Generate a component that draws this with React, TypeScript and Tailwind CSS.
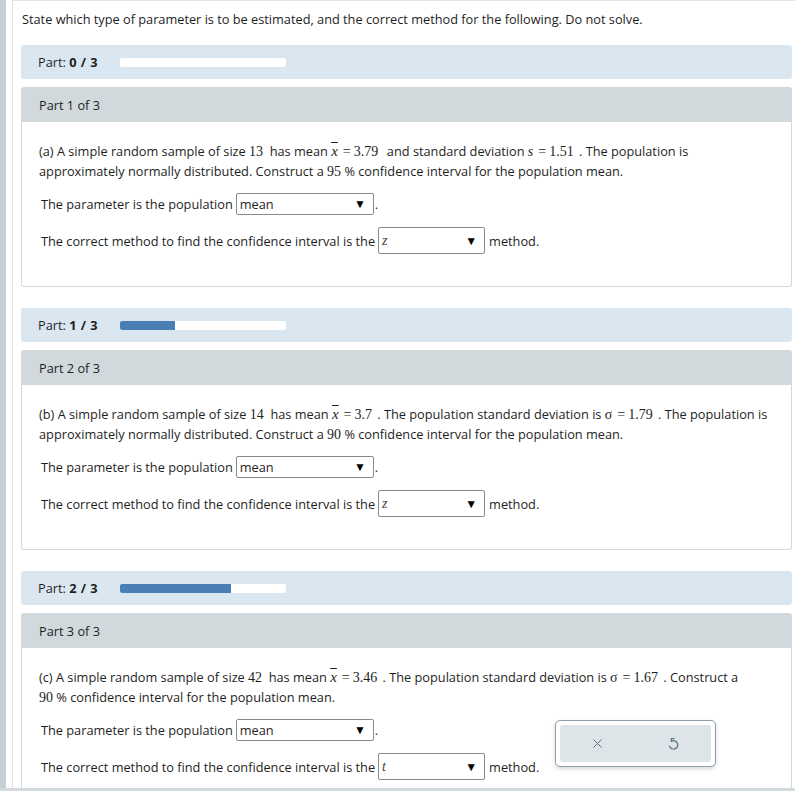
import { X } from "lucide-react";

const BODY = "font-['Open_Sans',Arial,sans-serif] text-[12.75px] leading-[20px] text-[#1e1e1e]";

function M({ children, italic }: { children: React.ReactNode; italic?: boolean }) {
  return (
    <span className={`font-['Liberation_Serif','Times_New_Roman',serif] text-[14px] leading-none ${italic ? "italic" : ""}`}>
      {children}
    </span>
  );
}

function XBar() {
  return <span className="font-['Liberation_Serif',serif] text-[15px] leading-none italic overline">x</span>;
}

function Eq({ children }: { children: React.ReactNode }) {
  return (
    <span className="font-['Liberation_Serif',serif] text-[14px] leading-none mx-[2px]">
      <span className="mx-[3px]">=</span>
      {children}
    </span>
  );
}

function Progress({ done }: { done: number }) {
  return (
    <div className="flex h-[34px] items-center rounded-[3px] bg-[#dae6f0] pl-[17px]">
      <span className="w-[82px]">
        Part: <b className="font-bold tracking-[0.5px]">{done} / 3</b>
      </span>
      <div className="h-[9px] w-[166px] overflow-hidden rounded-[2px] bg-white">
        <div className="h-full bg-[#4a7eb5]" style={{ width: `${(done / 3) * 100}%` }} />
      </div>
    </div>
  );
}

function Select({ value, italic, wide }: { value: string; italic?: boolean; wide?: boolean }) {
  return (
    <span
      className={`mx-[3px] inline-flex items-center justify-between rounded-[2px] border border-[#8a8a8a] bg-white pl-[3px] pr-[7px] align-middle ${
        wide ? "h-[27px] w-[107px]" : "h-[22px] w-[138px]"
      }`}
    >
      <span className={italic ? "font-['Liberation_Serif',serif] text-[14px] italic text-[#444]" : ""}>{value}</span>
      <span className="text-[12px] leading-none text-black">▼</span>
    </span>
  );
}

function ResetIcon() {
  return (
    <svg width="15" height="15" viewBox="0 0 16 16" fill="none" stroke="currentColor" strokeWidth="1.4" strokeLinecap="round" strokeLinejoin="round">
      <path d="M8.6 2.8 H5.7 V5.6" />
      <path d="M5.7 5.6 A4.5 4.5 0 1 1 3.8 11" />
    </svg>
  );
}

function Question({
  n,
  children,
  method,
}: {
  n: number;
  children: React.ReactNode;
  method: string;
}) {
  return (
    <div>
      <div className="flex h-[35px] items-center rounded-t-[3px] bg-[#d1d9dc] pl-[18px]">Part {n} of 3</div>
      <div className="rounded-b-[3px] border border-t-0 border-[#d1d9dc] pl-[17px] pt-[19px] pb-[32px]">
        <p className="pr-[4px]">{children}</p>
        <div className="mt-[12px] flex items-center pl-[2px]">
          The parameter is the population
          <Select value="mean" />
          <span className="-ml-[2px]">.</span>
        </div>
        <div className="mt-[12px] flex items-center pl-[2px]">
          The correct method to find the confidence interval is the
          <Select value={method} italic wide />
          <span className="ml-[1px]">method.</span>
        </div>
      </div>
    </div>
  );
}

export default function App() {
  return (
    <div className={`relative flex h-[791px] flex-col overflow-hidden bg-white ${BODY}`}>
      <div className="flex flex-1">
        <div className="w-[6px] bg-[#c5d0d5]" />
        <div className="ml-[6px] flex-1 border-l border-t border-[#dfe3e6] pl-[8px] pr-[3px]">
          <p className="ml-[1px] mt-[8px]">
            State which type of parameter is to be estimated, and the correct method for the following. Do not solve.
          </p>

          <div className="mt-[16px] space-y-[8px]">
            <Progress done={0} />
            <Question n={1} method="z">
              (a) A simple random sample of size <M>13</M>&nbsp; has mean <XBar />
              <Eq>3.79</Eq>&nbsp; and standard deviation <M italic>s</M>
              <Eq>1.51</Eq> . The population is
              <br />
              approximately normally distributed. Construct a <M>95</M>&nbsp;% confidence interval for the population
              mean.
            </Question>
          </div>

          <div className="mt-[21px] space-y-[8px]">
            <Progress done={1} />
            <Question n={2} method="z">
              (b) A simple random sample of size <M>14</M>&nbsp; has mean <XBar />
              <Eq>3.7</Eq> . The population standard deviation is <M>σ</M>
              <Eq>1.79</Eq> . The population is
              <br />
              approximately normally distributed. Construct a <M>90</M>&nbsp;% confidence interval for the population
              mean.
            </Question>
          </div>

          <div className="mt-[21px] space-y-[8px]">
            <Progress done={2} />
            <Question n={3} method="t">
              (c) A simple random sample of size <M>42</M>&nbsp; has mean <XBar />
              <Eq>3.46</Eq> . The population standard deviation is <M>σ</M>
              <Eq>1.67</Eq> . Construct a
              <br />
              <M>90</M>&nbsp;% confidence interval for the population mean.
            </Question>
          </div>
        </div>
      </div>

      <div className="absolute bottom-0 left-0 right-0 h-[3px] bg-[#d3dbde]" />

      <div className="absolute left-[555px] top-[720px] rounded-[5px] border border-[#8aa0a8] bg-white p-[4px] shadow-[0_2px_4px_rgba(0,0,0,0.15)]">
        <div className="flex h-[37px] w-[151px] items-center justify-around rounded-[3px] bg-[#dde5e8] text-[#5b7682]">
          <X size={15} strokeWidth={1.6} />
          <ResetIcon />
        </div>
      </div>
    </div>
  );
}
